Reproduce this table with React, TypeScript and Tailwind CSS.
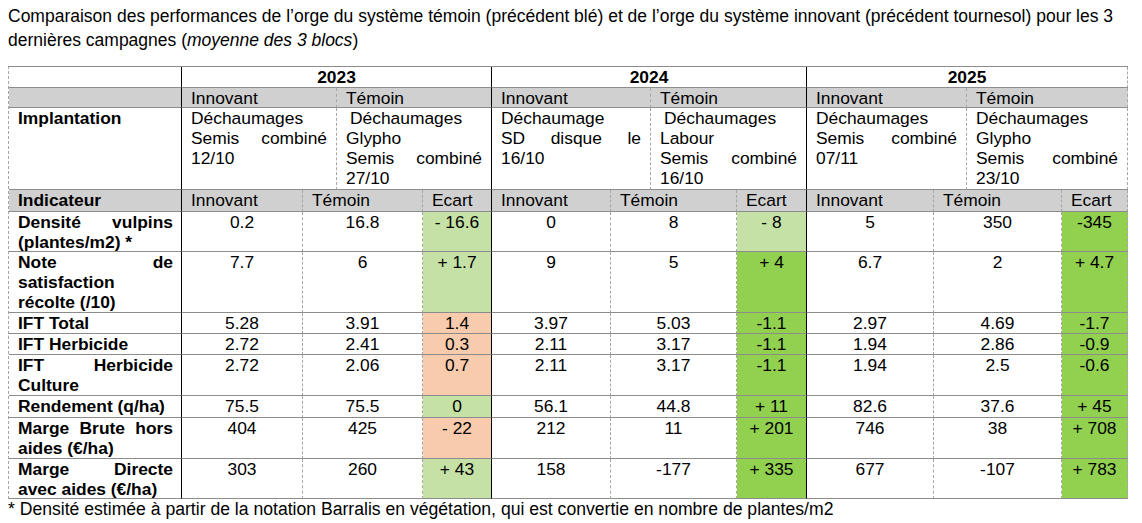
type Line = { t: string; j?: boolean; i?: boolean };
type Tone = 'lg' | 'g' | 's';

const TONE: Record<Tone, string> = {
  lg: 'bg-[#c5e1a5]',
  g: 'bg-[#92d050]',
  s: 'bg-[#f8cbad]',
};

const DASH = '[border-right:1px_dashed_#a6a6a6]';
const BLACK = '[border-right:1px_solid_#000]';
const BOTTOM = '[border-bottom:1px_solid_#8c8c8c]';
const GRAY = 'bg-[#d0d0d0]';

const IMPL: { inn: Line[]; tem: Line[] }[] = [
  {
    inn: [{ t: 'Déchaumages' }, { t: 'Semis combiné', j: true }, { t: '12/10' }],
    tem: [{ t: 'Déchaumages', i: true }, { t: 'Glypho' }, { t: 'Semis combiné', j: true }, { t: '27/10' }],
  },
  {
    inn: [{ t: 'Déchaumage' }, { t: 'SD disque le', j: true }, { t: '16/10' }],
    tem: [{ t: 'Déchaumages', i: true }, { t: 'Labour' }, { t: 'Semis combiné', j: true }, { t: '16/10' }],
  },
  {
    inn: [{ t: 'Déchaumages' }, { t: 'Semis combiné', j: true }, { t: '07/11' }],
    tem: [{ t: 'Déchaumages' }, { t: 'Glypho' }, { t: 'Semis combiné', j: true }, { t: '23/10' }],
  },
];

const ROWS: { label: Line[]; years: [string, string, string, Tone][] }[] = [
  {
    label: [{ t: 'Densité vulpins', j: true }, { t: '(plantes/m2) *' }],
    years: [['0.2', '16.8', '- 16.6', 'lg'], ['0', '8', '- 8', 'lg'], ['5', '350', '-345', 'g']],
  },
  {
    label: [{ t: 'Note de', j: true }, { t: 'satisfaction' }, { t: 'récolte (/10)' }],
    years: [['7.7', '6', '+ 1.7', 'lg'], ['9', '5', '+ 4', 'g'], ['6.7', '2', '+ 4.7', 'g']],
  },
  {
    label: [{ t: 'IFT Total' }],
    years: [['5.28', '3.91', '1.4', 's'], ['3.97', '5.03', '-1.1', 'g'], ['2.97', '4.69', '-1.7', 'g']],
  },
  {
    label: [{ t: 'IFT Herbicide' }],
    years: [['2.72', '2.41', '0.3', 's'], ['2.11', '3.17', '-1.1', 'g'], ['1.94', '2.86', '-0.9', 'g']],
  },
  {
    label: [{ t: 'IFT Herbicide', j: true }, { t: 'Culture' }],
    years: [['2.72', '2.06', '0.7', 's'], ['2.11', '3.17', '-1.1', 'g'], ['1.94', '2.5', '-0.6', 'g']],
  },
  {
    label: [{ t: 'Rendement (q/ha)' }],
    years: [['75.5', '75.5', '0', 'lg'], ['56.1', '44.8', '+ 11', 'g'], ['82.6', '37.6', '+ 45', 'g']],
  },
  {
    label: [{ t: 'Marge Brute hors', j: true }, { t: 'aides (€/ha)' }],
    years: [['404', '425', '- 22', 's'], ['212', '11', '+ 201', 'g'], ['746', '38', '+ 708', 'g']],
  },
  {
    label: [{ t: 'Marge Directe', j: true }, { t: 'avec aides (€/ha)' }],
    years: [['303', '260', '+ 43', 'lg'], ['158', '-177', '+ 335', 'g'], ['677', '-107', '+ 783', 'g']],
  },
];

const YEARS = ['2023', '2024', '2025'];

function Lines({ lines }: { lines: Line[] }) {
  return (
    <>
      {lines.map((l, k) => (
        <div
          key={k}
          className={`${l.j ? 'text-justify [text-align-last:justify]' : ''} ${l.i ? 'pl-[4px]' : ''}`}
        >
          {l.t}
        </div>
      ))}
    </>
  );
}

export default function App() {
  return (
    <div className="bg-white text-black font-['Liberation_Sans',Arial,sans-serif] text-[17.4px] leading-[20px] w-[1142px] h-[523px] overflow-hidden">
      <p className="px-2 pt-[4px] leading-[24px] text-[17.5px] whitespace-nowrap">
        Comparaison des performances de l’orge du système témoin (précédent blé) et de l’orge du système innovant (précédent tournesol) pour les 3
        <br />
        dernières campagnes (<i>moyenne des 3 blocs</i>)
      </p>

      <div
        className={`ml-[8px] mt-[14px] w-fit grid grid-cols-[173px_121px_34px_86px_69px_119px_40px_86px_70px_127px_33px_95px_66px] grid-rows-[21px_20px_82px_22px_40px_61px_21px_21px_41px_22px_41px_40px] [border-top:1px_solid_#8c8c8c] [border-left:1px_dashed_#a6a6a6]`}
      >
        {/* year row */}
        <div className={`${BLACK} ${BOTTOM}`} />
        {YEARS.map((y, n) => (
          <div key={y} className={`col-span-4 text-center font-bold ${n === 2 ? DASH : BLACK} ${BOTTOM}`}>
            {y}
          </div>
        ))}

        {/* innovant / témoin row */}
        <div className={`${GRAY} ${BLACK} ${BOTTOM}`} />
        {YEARS.map((y, n) => (
          <div key={y} className="contents">
            <div className={`col-span-2 px-[9px] ${GRAY} ${DASH} ${BOTTOM}`}>Innovant</div>
            <div className={`col-span-2 px-[9px] ${GRAY} ${n === 2 ? DASH : BLACK} ${BOTTOM}`}>Témoin</div>
          </div>
        ))}

        {/* implantation */}
        <div className={`pl-[9px] pr-[8px] font-bold ${BLACK} ${BOTTOM}`}>Implantation</div>
        {IMPL.map((im, n) => (
          <div key={n} className="contents">
            <div className={`col-span-2 px-[9px] ${DASH} ${BOTTOM}`}>
              <Lines lines={im.inn} />
            </div>
            <div className={`col-span-2 px-[9px] ${n === 2 ? DASH : BLACK} ${BOTTOM}`}>
              <Lines lines={im.tem} />
            </div>
          </div>
        ))}

        {/* indicateur header */}
        <div className={`pl-[9px] pr-[8px] font-bold ${GRAY} ${BLACK} ${BOTTOM}`}>Indicateur</div>
        {YEARS.map((y, n) => (
          <div key={y} className="contents">
            <div className={`px-[9px] ${GRAY} ${DASH} ${BOTTOM}`}>Innovant</div>
            <div className={`col-span-2 px-[9px] ${GRAY} ${DASH} ${BOTTOM}`}>Témoin</div>
            <div className={`px-[9px] ${GRAY} ${n === 2 ? DASH : BLACK} ${BOTTOM}`}>Ecart</div>
          </div>
        ))}

        {/* data rows */}
        {ROWS.map((r, k) => (
          <div key={k} className="contents">
            <div className={`pl-[9px] pr-[8px] font-bold ${BLACK} ${BOTTOM}`}>
              <Lines lines={r.label} />
            </div>
            {r.years.map(([inn, tem, ec, tone], n) => (
              <div key={n} className="contents">
                <div className={`px-1 text-center ${DASH} ${BOTTOM}`}>{inn}</div>
                <div className={`col-span-2 px-1 text-center ${DASH} ${BOTTOM}`}>{tem}</div>
                <div className={`px-1 text-center ${TONE[tone]} ${n === 2 ? DASH : BLACK} ${BOTTOM}`}>{ec}</div>
              </div>
            ))}
          </div>
        ))}
      </div>

      <p className="px-2 leading-[20px] text-[17.6px]">
        * Densité estimée à partir de la notation Barralis en végétation, qui est convertie en nombre de plantes/m2
      </p>
    </div>
  );
}
